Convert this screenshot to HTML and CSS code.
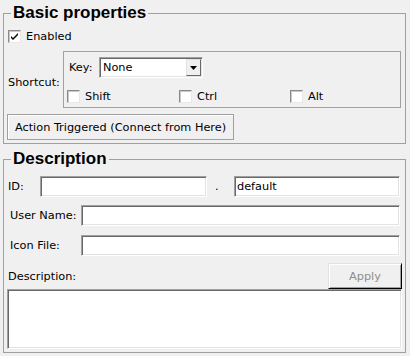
FILE: index.html
```html
<!DOCTYPE html>
<html lang="en">
  <head>
    <meta charset="UTF-8" />
    <title>Action Properties</title>
    <link rel="stylesheet" href="styles.css">
  </head>
  <body>
    <!-- Basic properties -->
    <fieldset class="group">
      <legend>Basic properties</legend>
      <div class="check-row">
        <span class="checkbox checked">
          <svg width="9" height="9" viewBox="0 0 9 9"><path d="M1 4 L3 6 L8 1 L8 3 L3 8 L1 6 Z" fill="#000"/></svg>
        </span>
        <span class="check-label">Enabled</span>
      </div>
      <div class="shortcut-row">
        <span class="shortcut-label">Shortcut:</span>
        <div class="inner-box">
          <div class="key-row">
            <span class="key-label">Key:</span>
            <div class="combo">
              <span class="combo-text">None</span>
              <span class="combo-btn">
                <svg width="7" height="4" viewBox="0 0 7 4"><path d="M0 0 H7 L3.5 4 Z" fill="#000"/></svg>
              </span>
            </div>
          </div>
          <div class="mod-row">
            <div class="mod"><span class="checkbox"></span><span class="check-label">Shift</span></div>
            <div class="mod"><span class="checkbox"></span><span class="check-label">Ctrl</span></div>
            <div class="mod"><span class="checkbox"></span><span class="check-label">Alt</span></div>
          </div>
        </div>
      </div>
      <button class="flat-btn">Action Triggered (Connect from Here)</button>
    </fieldset>

    <!-- Description -->
    <fieldset class="group group-desc">
      <legend>Description</legend>
      <div class="row row-id">
        <span class="lbl lbl-id">ID:</span>
        <input class="field field-id" type="text" value="" />
        <span class="dot">.</span>
        <input class="field field-grow" type="text" value="default" />
      </div>
      <div class="row row-user">
        <span class="lbl lbl-wide">User Name:</span>
        <input class="field field-grow" type="text" value="" />
      </div>
      <div class="row row-icon">
        <span class="lbl lbl-wide">Icon File:</span>
        <input class="field field-grow" type="text" value="" />
      </div>
      <div class="desc-row">
        <span class="lbl">Description:</span>
        <button class="apply-btn" disabled>Apply</button>
      </div>
      <textarea class="desc-text"></textarea>
    </fieldset>
  </body>
</html>
```

FILE: styles.css
```css
/* base */
body {
  margin: 0;
  background-color: #f0f0f0;
  font-family: "DejaVu Sans", sans-serif;
  font-size: 11.3px;
  color: #000;
}
.group {
  margin: 3px 4px 0 3px;
  padding: 0 3px 3px 3px;
  border: 1px solid #a0a0a0;
  min-width: 0;
}
.group legend {
  margin-left: 4px;
  padding: 0 2px;
  font-family: "Liberation Sans", sans-serif;
  font-weight: bold;
  font-size: 17px;
  line-height: 20px;
}
.group-desc {
  margin-top: 5px;
}

/* checkbox */
.checkbox {
  width: 11px;
  height: 11px;
  background-color: #fff;
  border: 1px solid;
  border-color: #8a8a8a #e8e8e8 #e8e8e8 #8a8a8a;
  box-shadow: inset 1px 1px 0 #c8c8c8;
  display: flex;
  align-items: center;
  justify-content: center;
  flex: none;
}
.check-label {
  margin-left: 5px;
}
.check-row {
  margin-top: 5px;
  height: 16px;
  display: flex;
  align-items: center;
  padding-left: 1px;
}

/* shortcut */
.shortcut-row {
  display: flex;
  margin-top: 7px;
}
.shortcut-label {
  width: 56px;
  padding-left: 1px;
  box-sizing: border-box;
  align-self: center;
  margin-top: 5px;
}
.inner-box {
  flex: 1;
  margin-right: 1px;
  border: 1px solid #a0a0a0;
  padding: 5px 0 3px 0;
}
.key-row {
  display: flex;
  align-items: center;
  padding-left: 5px;
}
.key-label {
  width: 30px;
}
.combo {
  width: 104px;
  height: 21px;
  box-sizing: border-box;
  background-color: #fff;
  border: 1px solid;
  border-color: #a0a0a0 #fff #fff #a0a0a0;
  box-shadow: inset 1px 1px 0 #696969, inset -1px -1px 0 #e3e3e3;
  display: flex;
  align-items: center;
  padding: 1px;
}
.combo-text {
  flex: 1;
  padding-left: 2px;
}
.combo-btn {
  width: 15px;
  height: 17px;
  box-sizing: border-box;
  background-color: #f0f0f0;
  border: 1px solid;
  border-color: #e3e3e3 #696969 #696969 #e3e3e3;
  display: flex;
  align-items: center;
  justify-content: center;
}
.mod-row {
  display: grid;
  grid-template-columns: 112px 111px 1fr;
  margin-top: 10px;
  padding-left: 3px;
  height: 16px;
}
.mod {
  display: flex;
  align-items: center;
}

/* buttons */
.flat-btn {
  display: block;
  margin-top: 6px;
  width: 227px;
  height: 26px;
  padding: 0;
  font-family: inherit;
  font-size: inherit;
  color: #000;
  background-color: #f0f0f0;
  border: 1px solid #a0a0a0;
  box-shadow: inset 1px 1px 0 #fff;
}
.apply-btn {
  width: 74px;
  height: 26px;
  padding: 0;
  font-family: inherit;
  font-size: inherit;
  color: #8d8d8d;
  background-color: #f0f0f0;
  border: 1px solid;
  border-color: #e3e3e3 #000 #000 #e3e3e3;
  box-shadow: inset 1px 1px 0 #fff, inset -1px -1px 0 #a0a0a0;
}

/* description fields */
.row {
  display: flex;
  align-items: center;
  margin-right: 2px;
}
.row-id {
  margin-top: 7px;
}
.row-user {
  margin-top: 8px;
}
.row-icon {
  margin-top: 9px;
}
.lbl {
  padding-left: 1px;
}
.lbl-id {
  width: 33px;
  box-sizing: border-box;
}
.lbl-wide {
  width: 74px;
  padding-left: 3px;
  box-sizing: border-box;
}
.dot {
  width: 27px;
  box-sizing: border-box;
  padding-left: 8px;
}
.field,
.desc-text {
  height: 21px;
  box-sizing: border-box;
  margin: 0;
  padding: 0 2px;
  font-family: inherit;
  font-size: inherit;
  color: #000;
  background-color: #fff;
  border: 1px solid;
  border-color: #a0a0a0 #fff #fff #a0a0a0;
  box-shadow: inset 1px 1px 0 #696969, inset -1px -1px 0 #e3e3e3;
  outline: none;
}
.field-id {
  width: 167px;
}
.field-grow {
  flex: 1;
  min-width: 0;
}
.desc-row {
  display: flex;
  align-items: center;
  justify-content: space-between;
  margin-top: 7px;
}
.desc-text {
  display: block;
  width: 100%;
  height: 60px;
  resize: none;
}
```
